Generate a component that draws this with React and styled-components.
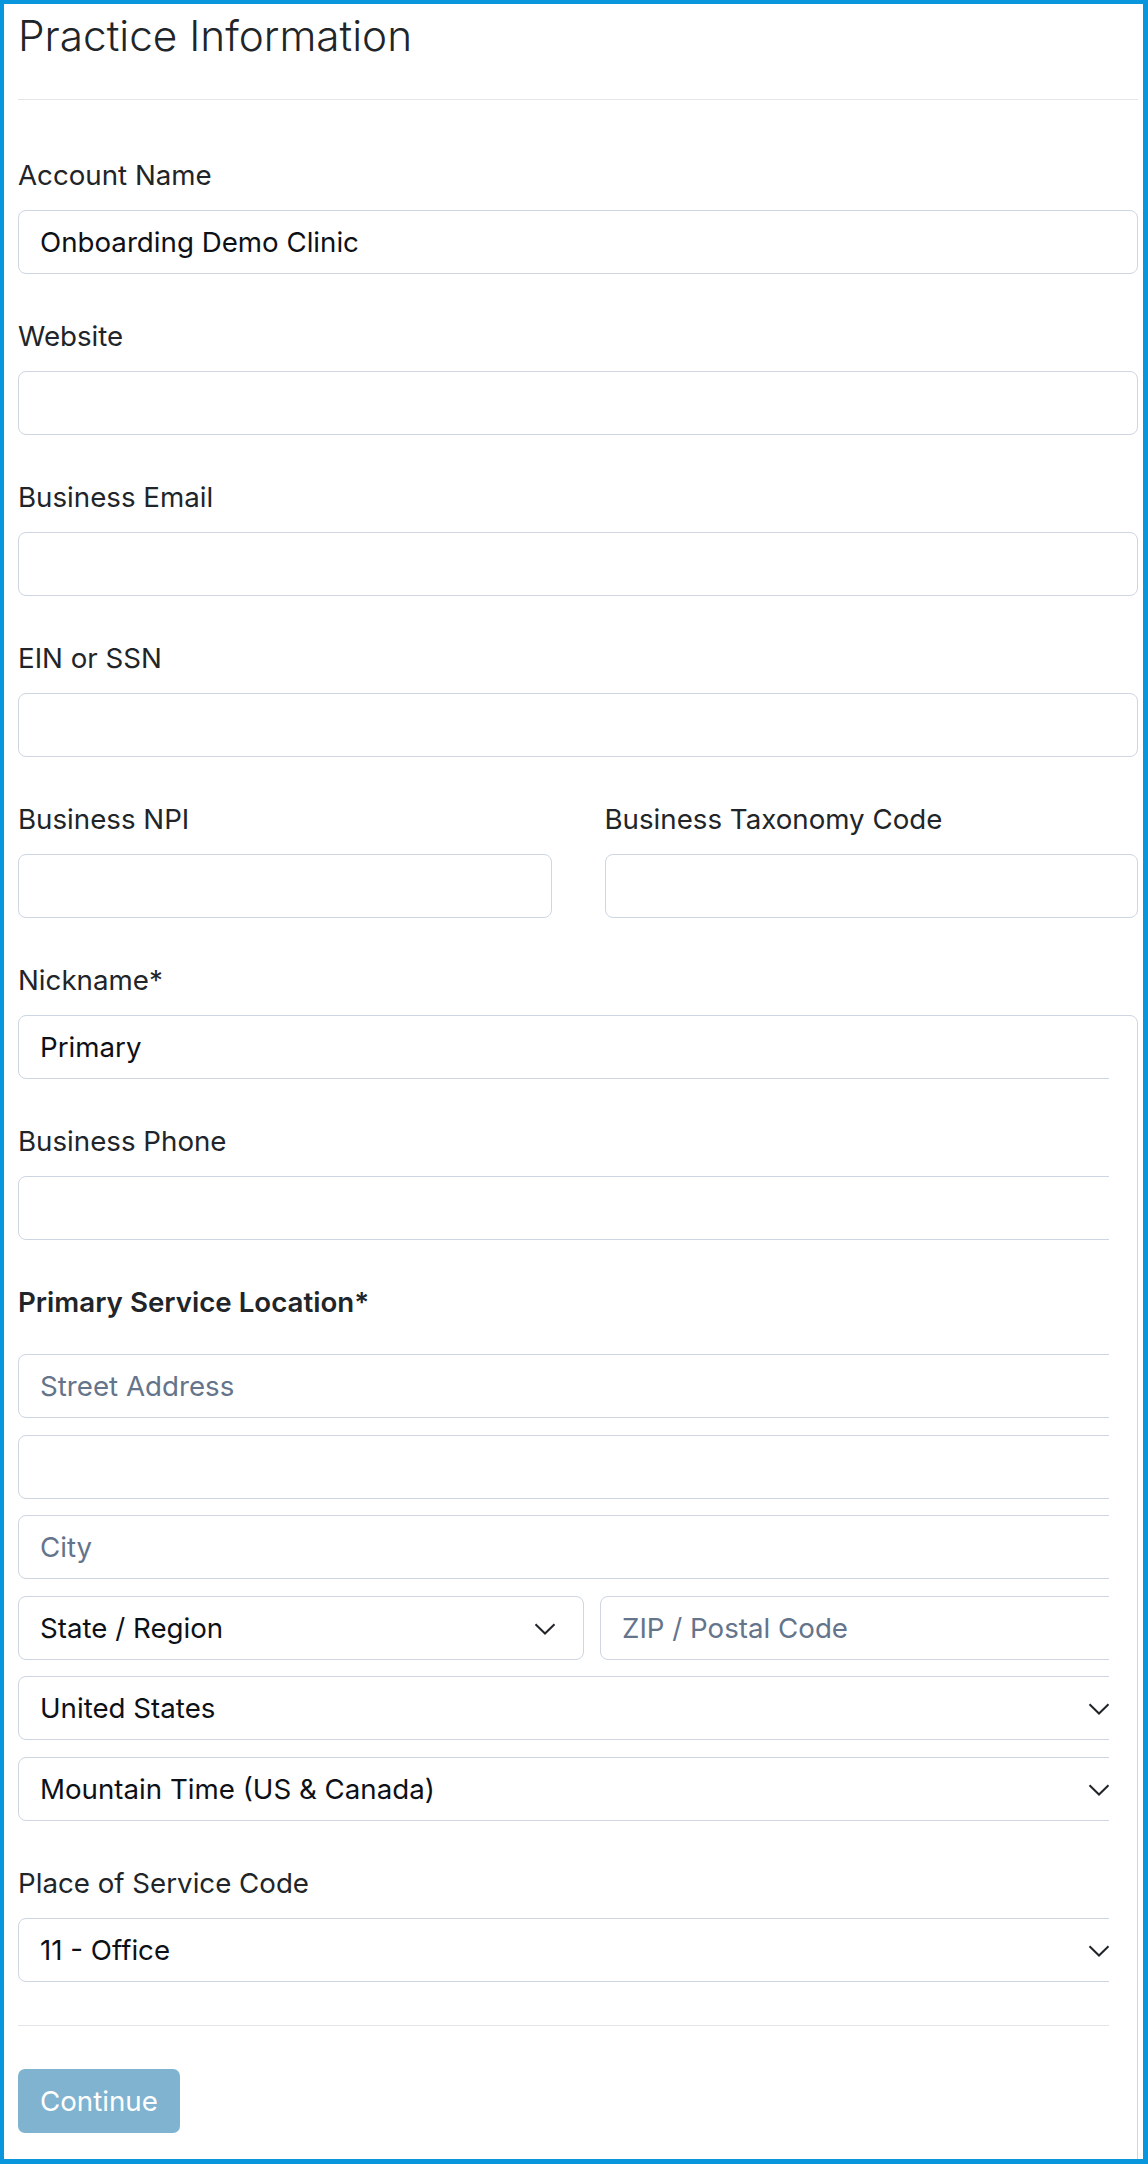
import React from "react";
import styled, { createGlobalStyle } from "styled-components";

const GlobalStyle = createGlobalStyle`
  html, body {
    margin: 0;
    padding: 0;
    background: #ffffff;
  }
  body {
    font-family: Inter, "Noto Sans", "Liberation Sans", sans-serif;
    color: #212529;
  }
  * {
    box-sizing: border-box;
  }
`;

function Chevron() {
  return (
    <ChevronIcon width="22" height="12" viewBox="0 0 22 12" aria-hidden="true">
      <polyline points="1.5,1.2 11,10.5 20.5,1.2" fill="none" stroke="#212529" strokeWidth="2" />
    </ChevronIcon>
  );
}

function TextField({ label, value, placeholder }) {
  return (
    <Field>
      <Label>{label}</Label>
      <Input defaultValue={value} placeholder={placeholder} />
    </Field>
  );
}

function SelectBox({ value, options }) {
  return (
    <SelectWrap>
      <Select defaultValue={value}>
        {options.map((o) => (
          <option key={o}>{o}</option>
        ))}
      </Select>
      <Chevron />
    </SelectWrap>
  );
}

export default function App() {
  return (
    <>
      <GlobalStyle />
      <Frame>
        <Title>Practice Information</Title>
        <Divider $top={37} $bottom={54} />

        <TextField label="Account Name" value="Onboarding Demo Clinic" />
        <TextField label="Website" />
        <TextField label="Business Email" />
        <TextField label="EIN or SSN" />

        <TwoCols>
          <TextField label="Business NPI" />
          <TextField label="Business Taxonomy Code" />
        </TwoCols>

        <LowerSection>
          <TextField label="Nickname*" value="Primary" />
          <TextField label="Business Phone" />

          <Field>
            <Label $bold $gap={31}>Primary Service Location*</Label>
            <AddressStack>
              <Input placeholder="Street Address" />
              <Input />
              <Input placeholder="City" />
              <AddressRow>
                <SelectBox value="State / Region" options={["State / Region", "Colorado", "Utah"]} />
                <Input placeholder="ZIP / Postal Code" />
              </AddressRow>
              <SelectBox value="United States" options={["United States", "Canada"]} />
              <SelectBox
                value="Mountain Time (US & Canada)"
                options={["Mountain Time (US & Canada)", "Pacific Time (US & Canada)"]}
              />
            </AddressStack>
          </Field>

          <Field $last>
            <Label>Place of Service Code</Label>
            <SelectBox value="11 - Office" options={["11 - Office", "02 - Telehealth"]} />
          </Field>

          <Divider $top={43} $bottom={43} />

          <ContinueButton disabled>Continue</ContinueButton>

          <ScrollGutter />
        </LowerSection>
      </Frame>
    </>
  );
}

const Frame = styled.div`
  width: 100%;
  min-height: 100vh;
  border: 4px solid #0996dc;
  border-right-width: 5px;
  border-bottom-width: 6px;
  padding: 0 5px 0 14px;
  display: flex;
  flex-direction: column;
`;

const Title = styled.h1`
  margin: 6px 0 0;
  font-size: 42.3px;
  line-height: 52px;
  font-weight: 300;
  color: #212529;
`;

const Divider = styled.hr`
  width: 100%;
  margin: ${(p) => p.$top}px 0 ${(p) => p.$bottom}px;
  border: none;
  border-top: 1px solid #e3e5e8;
  height: 0;
`;

const Field = styled.div`
  display: flex;
  flex-direction: column;
  margin-bottom: ${(p) => (p.$last ? 0 : 41)}px;
`;

const Label = styled.label`
  font-size: 27.7px;
  line-height: 42px;
  font-weight: ${(p) => (p.$bold ? 600 : 400)};
  color: #212529;
  margin-bottom: ${(p) => p.$gap ?? 14}px;
`;

const Input = styled.input`
  width: 100%;
  height: 64px;
  padding: 0 21px;
  border: 1px solid #cdd6e2;
  border-radius: 8px;
  background: #ffffff;
  font-family: inherit;
  font-size: 27.7px;
  color: #0d1117;
  outline: none;

  &::placeholder {
    color: #64748b;
    opacity: 1;
  }
`;

const TwoCols = styled.div`
  display: grid;
  grid-template-columns: 1fr 1fr;
  column-gap: 53px;
`;

const LowerSection = styled.div`
  position: relative;
  flex: 1;
  display: flex;
  flex-direction: column;
  align-items: stretch;
  padding-bottom: 26px;
`;

const AddressStack = styled.div`
  display: flex;
  flex-direction: column;
  gap: 16.6px;
`;

const AddressRow = styled.div`
  display: grid;
  grid-template-columns: 566px 1fr;
  column-gap: 16px;
`;

const SelectWrap = styled.div`
  position: relative;
  width: 100%;
`;

const Select = styled.select`
  width: 100%;
  height: 64px;
  padding: 0 60px 0 21px;
  border: 1px solid #cdd6e2;
  border-radius: 8px;
  background: #ffffff;
  font-family: inherit;
  font-size: 27.7px;
  color: #0d1117;
  appearance: none;
  -webkit-appearance: none;
  outline: none;
`;

const ChevronIcon = styled.svg`
  position: absolute;
  right: 28px;
  top: 50%;
  margin-top: -5px;
  pointer-events: none;
`;

const ContinueButton = styled.button`
  align-self: flex-start;
  height: 64px;
  padding: 0 22px;
  border: none;
  border-radius: 7px;
  background: #80b3d0;
  color: #ffffff;
  font-family: inherit;
  font-size: 27.7px;
  font-weight: 400;
  cursor: default;
`;

const ScrollGutter = styled.div`
  position: absolute;
  top: 64px;
  right: 0;
  bottom: 0;
  width: 29px;
  background: #ffffff;
  border-right: 1px solid #cdd6e2;
`;
